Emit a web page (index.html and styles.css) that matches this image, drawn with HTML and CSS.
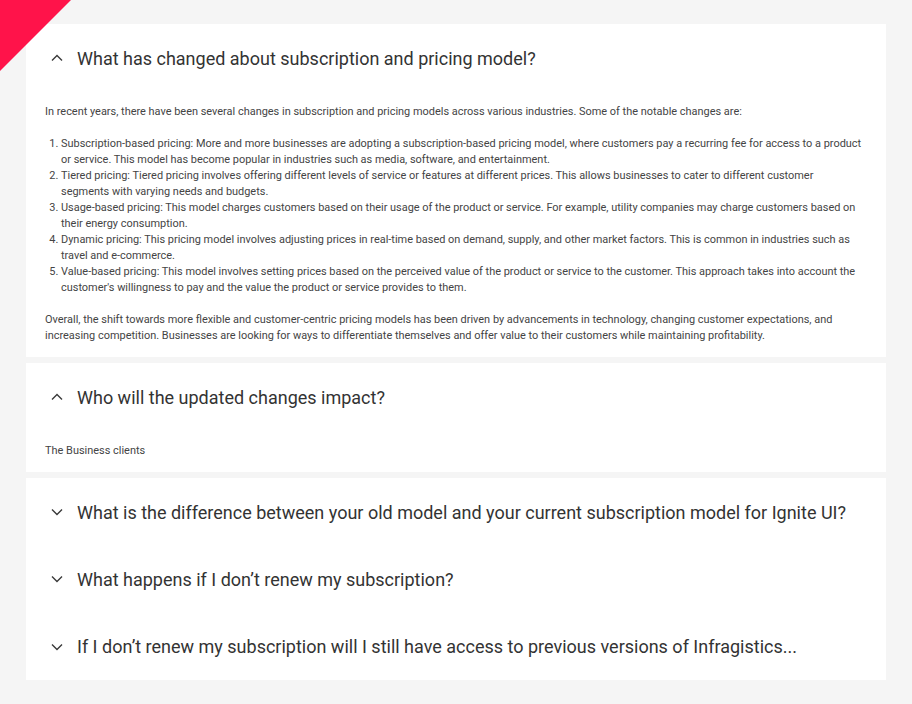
FILE: index.html
```html
<!DOCTYPE html>
<html lang="en">
<head>
    <meta charset="utf-8">
    <title>FAQ</title>
    <link rel="stylesheet" href="styles.css">
</head>
<body>
    <div class="corner"></div>
    <div class="accordion">
        <div class="panel expanded">
            <div class="panel-header">
                <svg class="chevron" viewBox="0 0 24 24"><path d="M7 14.5l5-5 5 5"/></svg>
                <span class="panel-title">What has changed about subscription and pricing model?</span>
            </div>
            <div class="panel-body">
                <p>In recent years, there have been several changes in subscription and pricing models across various industries. Some of the notable changes are:</p>
                <ol>
                    <li>Subscription-based pricing: More and more businesses are adopting a subscription-based pricing model, where customers pay a recurring fee for access to a product or service. This model has become popular in industries such as media, software, and entertainment.</li>
                    <li>Tiered pricing: Tiered pricing involves offering different levels of service or features at different prices. This allows businesses to cater to different customer segments with varying needs and budgets.</li>
                    <li>Usage-based pricing: This model charges customers based on their usage of the product or service. For example, utility companies may charge customers based on their energy consumption.</li>
                    <li>Dynamic pricing: This pricing model involves adjusting prices in real-time based on demand, supply, and other market factors. This is common in industries such as travel and e-commerce.</li>
                    <li>Value-based pricing: This model involves setting prices based on the perceived value of the product or service to the customer. This approach takes into account the customer's willingness to pay and the value the product or service provides to them.</li>
                </ol>
                <p>Overall, the shift towards more flexible and customer-centric pricing models has been driven by advancements in technology, changing customer expectations, and increasing competition. Businesses are looking for ways to differentiate themselves and offer value to their customers while maintaining profitability.</p>
            </div>
        </div>
        <div class="panel expanded">
            <div class="panel-header">
                <svg class="chevron" viewBox="0 0 24 24"><path d="M7 14.5l5-5 5 5"/></svg>
                <span class="panel-title">Who will the updated changes impact?</span>
            </div>
            <div class="panel-body">
                <p>The Business clients</p>
            </div>
        </div>
        <div class="group">
            <div class="panel">
                <div class="panel-header">
                    <svg class="chevron" viewBox="0 0 24 24"><path d="M7 9.5l5 5 5-5"/></svg>
                    <span class="panel-title">What is the difference between your old model and your current subscription model for Ignite UI?</span>
                </div>
            </div>
            <div class="panel">
                <div class="panel-header">
                    <svg class="chevron" viewBox="0 0 24 24"><path d="M7 9.5l5 5 5-5"/></svg>
                    <span class="panel-title">What happens if I don’t renew my subscription?</span>
                </div>
            </div>
            <div class="panel">
                <div class="panel-header">
                    <svg class="chevron" viewBox="0 0 24 24"><path d="M7 9.5l5 5 5-5"/></svg>
                    <span class="panel-title">If I don’t renew my subscription will I still have access to previous versions of Infragistics...</span>
                </div>
            </div>
        </div>
    </div>
</body>
</html>
```
FILE: styles.css
```css
body {
    margin: 0;
    padding: 24px 26px;
    background-color: #f5f5f5;
    font-family: Roboto, "Noto Sans", sans-serif;
}
/* Red ribbon in the top left corner */
.corner {
    position: absolute;
    top: 0;
    left: 0;
    width: 71px;
    height: 71px;
    background-color: #ff134a;
    clip-path: polygon(0 0, 100% 0, 0 100%);
}
.accordion {
    display: flex;
    flex-direction: column;
    gap: 6px;
    width: 860px;
}
.panel {
    background-color: #fff;
}
.panel-header {
    display: flex;
    align-items: center;
    height: 67px;
    padding: 1px 19px 0;
    box-sizing: border-box;
}
.group .panel:last-child .panel-header {
    height: 68px;
}
.chevron {
    width: 24px;
    height: 24px;
    flex-shrink: 0;
    margin-right: 8px;
    fill: none;
    stroke: #3a3a3a;
    stroke-width: 1.4;
}
.panel-title {
    font-size: 18px;
    color: #333;
    white-space: nowrap;
    overflow: hidden;
    text-overflow: ellipsis;
}
.panel-body {
    padding: 13px 22px 13px 19px;
    font-size: 10.95px;
    line-height: 16px;
    color: #444;
}
.panel-body p {
    margin: 0;
}
.panel-body ol {
    margin: 16px 0;
    padding-left: 16px;
}
```
